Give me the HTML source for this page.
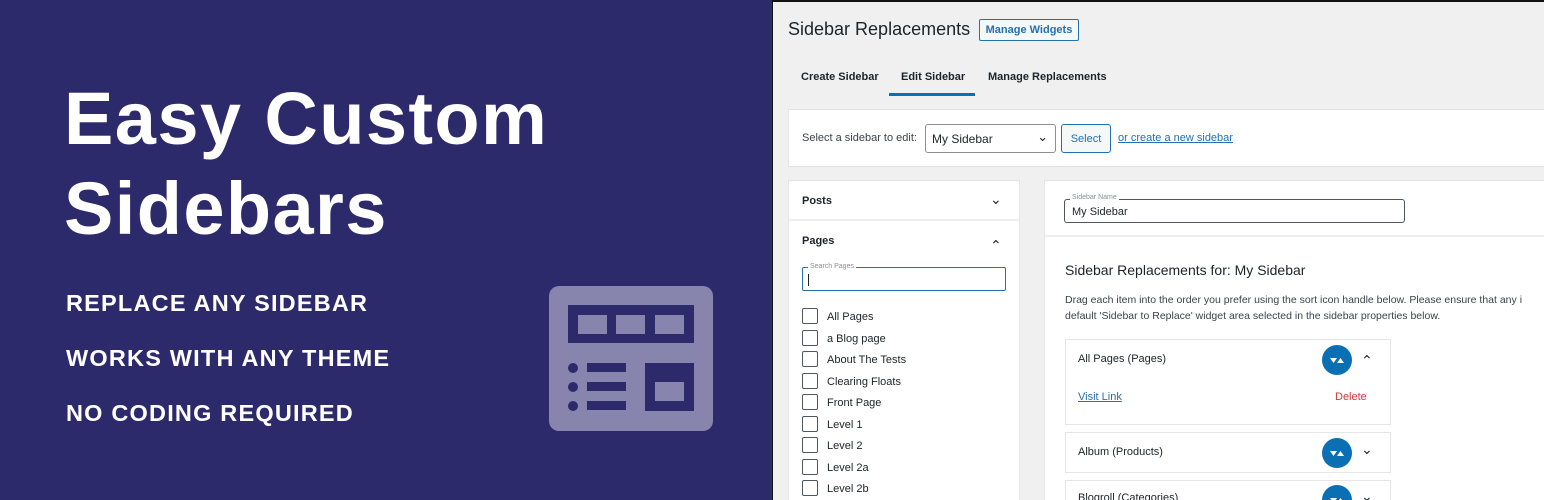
<!DOCTYPE html>
<html><head><meta charset="utf-8"><style>
*{box-sizing:border-box;margin:0;padding:0}
html,body{width:1544px;height:500px;overflow:hidden}
body{position:relative;background:#2d2a6b;font-family:"Liberation Sans",sans-serif}
.a{position:absolute}
.L{background:#2d2a6b;left:0;top:0;width:772px;height:500px}
.h1{left:64px;color:#fff;font-weight:bold;font-size:74px;line-height:90px;letter-spacing:1.4px}
.sub{left:66px;color:#fff;font-weight:bold;font-size:23.5px;letter-spacing:1.2px}
.R{left:773px;top:2px;width:771px;height:498px;background:#f0f0f1}
.t{color:#1d2327;font-size:12px;white-space:nowrap}
.card{background:#fff;border:1px solid #e2e4e7}
.cb{width:16px;height:16px;border:1px solid #50575e;border-radius:2px;background:#fff}
.it{background:#fff;border:1px solid #e6e6e6}
.circ{width:30px;height:30px;border-radius:50%;background:#0a6fb3}
</style></head><body>
<div class="a L"></div>
<div class="a h1" style="top:74px">Easy Custom</div>
<div class="a h1" style="top:164px">Sidebars</div>
<div class="a sub" style="top:290px">REPLACE ANY SIDEBAR</div>
<div class="a sub" style="top:345px">WORKS WITH ANY THEME</div>
<div class="a sub" style="top:400px">NO CODING REQUIRED</div>
<svg class="a" style="left:549px;top:286px" width="164" height="145" viewBox="0 0 164 145">
<rect x="0" y="0" width="164" height="145" rx="10" fill="#8785ad"/>
<rect x="19" y="19" width="126" height="38" fill="#2d2a6b"/>
<rect x="29" y="29" width="29" height="19" fill="#8785ad"/>
<rect x="67" y="29" width="29" height="19" fill="#8785ad"/>
<rect x="106" y="29" width="29" height="19" fill="#8785ad"/>
<circle cx="24" cy="82" r="5" fill="#2d2a6b"/><circle cx="24" cy="101" r="5" fill="#2d2a6b"/><circle cx="24" cy="120" r="5" fill="#2d2a6b"/>
<rect x="38" y="77" width="39" height="9" fill="#2d2a6b"/><rect x="38" y="96" width="39" height="9" fill="#2d2a6b"/><rect x="38" y="115" width="39" height="9" fill="#2d2a6b"/>
<rect x="96" y="77" width="49" height="48" fill="#2d2a6b"/>
<rect x="106" y="96" width="29" height="19" fill="#8785ad"/>
</svg>
<div class="a R"></div>
<div class="a" style="left:788px;top:19px;font-size:18px;color:#1d2327">Sidebar Replacements</div>
<div class="a" style="left:979px;top:19px;width:100px;height:22px;border:1px solid #2271b1;border-radius:2px;background:#f6f7f7;color:#2271b1;font-size:11px;font-weight:bold;text-align:center;line-height:20px">Manage Widgets</div>
<div class="a t" style="left:801px;top:71px;font-weight:bold;font-size:11px">Create Sidebar</div>
<div class="a t" style="left:901px;top:71px;font-weight:bold;font-size:11px">Edit Sidebar</div>
<div class="a t" style="left:988px;top:71px;font-weight:bold;font-size:11px">Manage Replacements</div>
<div class="a" style="left:889px;top:93px;width:86px;height:3px;background:#0a6fb3"></div>
<div class="a card" style="left:788px;top:109px;width:760px;height:58px"></div>
<div class="a t" style="left:802px;top:132px;font-size:11px;color:#3c434a">Select a sidebar to edit:</div>
<div class="a" style="left:925px;top:124px;width:131px;height:29px;border:1px solid #8c8f94;border-radius:3px;background:#fff;font-size:12px;color:#1d2327;padding:7px 0 0 6px">My Sidebar<span style="position:absolute;right:7px;top:4px;font-size:13px">&#8964;</span></div>
<div class="a" style="left:1061px;top:124px;width:50px;height:29px;border:1px solid #2271b1;border-radius:3px;background:#f6f7f7;color:#2271b1;font-size:11px;text-align:center;line-height:28px">Select</div>
<div class="a" style="left:1118px;top:132px;font-size:11px;color:#2271b1;text-decoration:underline">or create a new sidebar</div>
<div class="a card" style="left:788px;top:180px;width:232px;height:330px"></div>
<div class="a" style="left:789px;top:219px;width:230px;height:2px;background:#eceef0"></div>
<div class="a t" style="left:802px;top:195px;font-weight:bold;font-size:11px">Posts</div>
<div class="a t" style="left:990px;top:191px;font-size:14px">&#8964;</div>
<div class="a t" style="left:802px;top:235px;font-weight:bold;font-size:11px">Pages</div>
<div class="a t" style="left:990px;top:236px;font-size:14px;transform:rotate(180deg)">&#8964;</div>
<div class="a" style="left:802px;top:267px;width:204px;height:24px;border:1.5px solid #2271b1;border-radius:2px;background:#fff"><div style="position:absolute;left:5px;top:-5px;font-size:7px;color:#8c8f94;background:#fff;padding:0 2px">Search Pages</div><div style="position:absolute;left:5px;top:6px;width:1px;height:12px;background:#1d2327"></div></div>
<div class="a" style="left:802px;top:308px">
<div style="position:relative;height:21.5px"><div class="cb a"></div><span class="a t" style="left:25px;top:3px;font-size:11px">All Pages</span></div>
<div style="position:relative;height:21.5px"><div class="cb a"></div><span class="a t" style="left:25px;top:3px;font-size:11px">a Blog page</span></div>
<div style="position:relative;height:21.5px"><div class="cb a"></div><span class="a t" style="left:25px;top:3px;font-size:11px">About The Tests</span></div>
<div style="position:relative;height:21.5px"><div class="cb a"></div><span class="a t" style="left:25px;top:3px;font-size:11px">Clearing Floats</span></div>
<div style="position:relative;height:21.5px"><div class="cb a"></div><span class="a t" style="left:25px;top:3px;font-size:11px">Front Page</span></div>
<div style="position:relative;height:21.5px"><div class="cb a"></div><span class="a t" style="left:25px;top:3px;font-size:11px">Level 1</span></div>
<div style="position:relative;height:21.5px"><div class="cb a"></div><span class="a t" style="left:25px;top:3px;font-size:11px">Level 2</span></div>
<div style="position:relative;height:21.5px"><div class="cb a"></div><span class="a t" style="left:25px;top:3px;font-size:11px">Level 2a</span></div>
<div style="position:relative;height:21.5px"><div class="cb a"></div><span class="a t" style="left:25px;top:3px;font-size:11px">Level 2b</span></div>
</div>
<div class="a card" style="left:1044px;top:180px;width:510px;height:330px"></div>
<div class="a" style="left:1045px;top:235px;width:500px;height:2px;background:#eceef0"></div>
<div class="a" style="left:1064px;top:199px;width:341px;height:24px;border:1px solid #50575e;border-radius:3px;background:#fff"><div style="position:absolute;left:5px;top:-6px;font-size:7px;color:#8c8f94;background:#fff;padding:0 2px">Sidebar Name</div><div style="position:absolute;left:7px;top:6px;font-size:11px;color:#1d2327">My Sidebar</div></div>
<div class="a t" style="left:1065px;top:262px;font-size:14px">Sidebar Replacements for: My Sidebar</div>
<div class="a t" style="left:1065px;top:292px;font-size:10.5px;color:#3c434a;line-height:16px">Drag each item into the order you prefer using the sort icon handle below. Please ensure that any i<br>default 'Sidebar to Replace' widget area selected in the sidebar properties below.</div>
<div class="a it" style="left:1065px;top:339px;width:326px;height:86px"></div>
<div class="a t" style="left:1078px;top:353px;font-size:11px">All Pages (Pages)</div>
<div class="a circ" style="left:1322px;top:345px"></div>
<div class="a t" style="left:1361px;top:351px;font-size:14px;transform:rotate(180deg)">&#8964;</div>
<div class="a" style="left:1078px;top:391px;font-size:11px;color:#2271b1;text-decoration:underline">Visit Link</div>
<div class="a" style="left:1335px;top:391px;font-size:11px;color:#d63638">Delete</div>
<div class="a it" style="left:1065px;top:432px;width:326px;height:41px"></div>
<div class="a t" style="left:1078px;top:446px;font-size:11px">Album (Products)</div>
<div class="a circ" style="left:1322px;top:438px"></div>
<div class="a t" style="left:1361px;top:441px;font-size:14px">&#8964;</div>
<div class="a it" style="left:1065px;top:480px;width:326px;height:41px"></div>
<div class="a t" style="left:1078px;top:492px;font-size:11px">Blogroll (Categories)</div>
<div class="a circ" style="left:1322px;top:485px"></div>
<div class="a t" style="left:1361px;top:488px;font-size:14px">&#8964;</div>
<svg class="a" style="left:1322px;top:345px" width="30" height="160"><g fill="#fff"><path d="M8 13h7l-3.5 5z M15 18h7l-3.5-5z"/><path d="M8 106h7l-3.5 5z M15 111h7l-3.5-5z"/><path d="M8 153h7l-3.5 5z M15 158h7l-3.5-5z"/></g></svg>
<div class="a" style="left:772px;top:0;width:1px;height:500px;background:#111"></div>
<div class="a" style="left:772px;top:0;width:772px;height:2px;background:#111"></div>
</body></html>
